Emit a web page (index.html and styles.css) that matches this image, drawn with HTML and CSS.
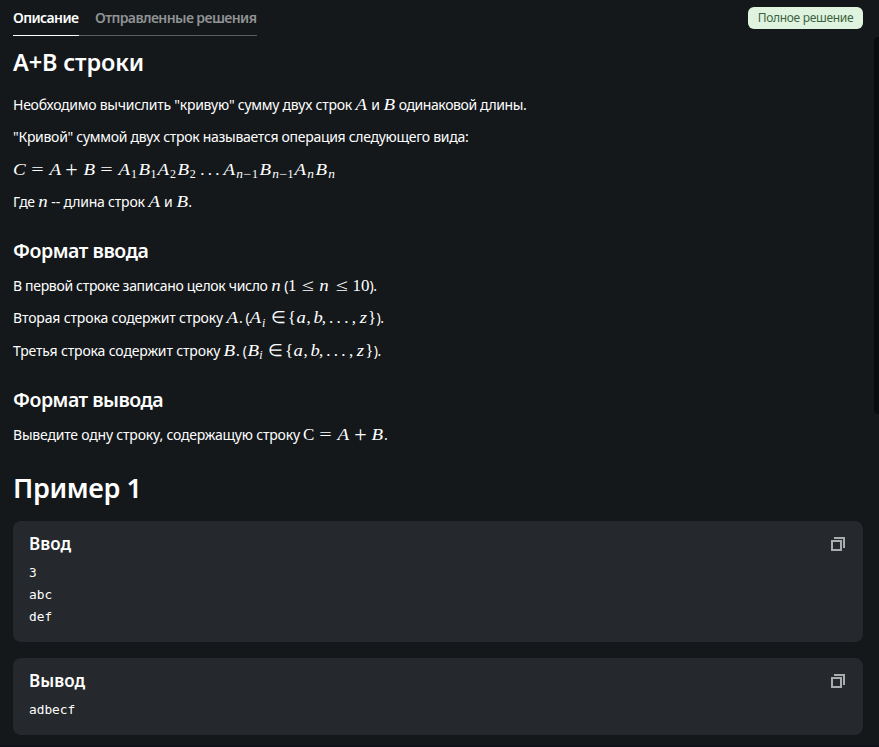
FILE: index.html
```html
<!DOCTYPE html>
<html lang="ru">
<head>
<meta charset="utf-8">
<title>A+B строки</title>
<link rel="stylesheet" href="styles.css">
</head>
<body>
<main class="page">
  <header class="top">
    <nav class="tabs"><a class="tab tab-active">Описание</a><a class="tab tab-second">Отправленные решения</a></nav>
    <span class="badge">Полное решение</span>
  </header>
  <h2 class="title">A+B строки</h2>
  <section class="text">
    <p><span class="t1">Необходимо вычислить "кривую" сумму двух строк</span> <i class="v">A</i> и <i class="v">B</i> <span class="t1b">одинаковой длины.</span></p>
    <p><span class="t2">"Кривой" суммой двух строк называется операция следующего вида:</span></p>
    <p><span class="m"><i class="v">C</i><b class="op">=</b><i class="v">A</i><b class="op plus">+</b><i class="v">B</i><b class="op">=</b><i class="v">A</i><sub>1</sub><i class="v">B</i><sub>1</sub><i class="v">A</i><sub>2</sub><i class="v">B</i><sub>2</sub><span class="dots">...</span><i class="v">A</i><sub><i class="n">n</i><b class="minus">−</b>1</sub><i class="v">B</i><sub><i class="n">n</i><b class="minus">−</b>1</sub><i class="v">A</i><sub><i class="n">n</i></sub><i class="v">B</i><sub><i class="n">n</i></sub></span></p>
    <p>Где <i class="v n">n</i> <span class="dash">--</span> <span class="t4">длина строк</span> <i class="v">A</i> и <i class="v">B</i>.</p>
  </section>
  <h3 class="sub">Формат ввода</h3>
  <section class="text">
    <p><span class="t5">В первой строке записано целок число</span> <i class="v n">n</i> (<span class="m">1<b class="op">≤</b><i class="n">n</i><b class="op">≤</b>10</span>).</p>
    <p><span class="t6">Вторая строка содержит строку</span> <i class="v">A</i>. (<span class="m"><i class="v">A</i><sub><i>i</i></sub><b class="op in">∈</b><span class="brace">{</span><i class="a">a</i><span class="c">,</span><i class="b">b</i><span class="c">,</span><span class="dots list">...</span><span class="c">,</span><i class="z">z</i><span class="brace">}</span></span>).</p>
    <p><span class="t6">Третья строка содержит строку</span> <i class="v">B</i>. (<span class="m"><i class="v">B</i><sub><i>i</i></sub><b class="op in">∈</b><span class="brace">{</span><i class="a">a</i><span class="c">,</span><i class="b">b</i><span class="c">,</span><span class="dots list">...</span><span class="c">,</span><i class="z">z</i><span class="brace">}</span></span>).</p>
  </section>
  <h3 class="sub sub-out">Формат вывода</h3>
  <section class="text">
    <p><span class="t8">Выведите одну строку, содержащую строку</span> <span class="m">C<b class="op">=</b><i class="v">A</i><b class="op plus">+</b><i class="v">B</i></span>.</p>
  </section>
  <h1 class="example">Пример 1</h1>
  <section class="card">
    <div class="card-head"><h4>Ввод</h4><svg class="copy" viewBox="0 0 16 16"><path d="M2 5h9v9H2zM4 2h10v10"/></svg></div>
    <pre>3
abc
def</pre>
  </section>
  <section class="card">
    <div class="card-head"><h4>Вывод</h4><svg class="copy" viewBox="0 0 16 16"><path d="M2 5h9v9H2zM4 2h10v10"/></svg></div>
    <pre>adbecf</pre>
  </section>
</main>
<div class="scrollbar"></div>
<div class="edge"></div>
</body>
</html>
```

FILE: styles.css
```css
* { box-sizing: border-box; }
body { margin: 0; height: 747px; overflow: hidden; background: #14181b; color: #fff; font: 14px/20px "Noto Sans", "Open Sans", sans-serif; }
h1, h2, h3, h4, p, pre { margin: 0; }
.page { padding: 0 16px 0 13px; }
.top { display: flex; justify-content: space-between; height: 36px; }
.tabs { display: flex; height: 36px; line-height: 36px; font-weight: 600; white-space: nowrap; }
.tab { border-bottom: 1px solid #5c5f61; color: #909294; width: 178px; padding-left: 16px; letter-spacing: -.6px; }
.tab-active { border-color: #fff; color: #fff; width: 66px; padding: 0; letter-spacing: -.6px; }
.badge { margin-top: 7px; width: 115px; height: 22px; border-radius: 6px; background: #e0f3df; color: #39633e; font-size: 12px; line-height: 21px; letter-spacing: -.3px; text-align: center; }
.title { margin-top: 10px; font-size: 23.5px; line-height: 32px; font-weight: 600; letter-spacing: -.15px; }
.text { margin-top: 11px; white-space: nowrap; letter-spacing: -.4px; }
.text p { height: 32.3px; line-height: 32.3px; }
.t1 { letter-spacing: -.25px; }
.t1b { letter-spacing: -.4px; }
.t2 { letter-spacing: -.29px; }
.dash { letter-spacing: .01px; font-variant-ligatures: none; }
.t4 { letter-spacing: -.2px; }
.t5 { letter-spacing: -.32px; }
.t6 { letter-spacing: -.15px; }
.t8 { letter-spacing: -.2px; }
.sub { margin-top: 19px; font-size: 19.5px; line-height: 28px; font-weight: 600; letter-spacing: -.45px; }
.sub + .text { margin-top: 5px; }
.sub-out { margin-top: 19px; letter-spacing: -.5px; }
.example { margin-top: 20px; font-size: 27px; line-height: 34px; font-weight: 600; letter-spacing: -.35px; }
.m, .v { font-family: "Liberation Serif", serif; font-size: 16.94px; letter-spacing: 0; }
.m .v { font-size: 1em; }
.v { display: inline-block; width: .75em; line-height: 20px; text-align: center; transform: scaleX(1.12); }
.n { display: inline-block; width: .6em; text-align: center; transform: scaleX(1.12); }
.op { display: inline-block; width: .778em; margin: 0 .29em; line-height: 20px; font-weight: 400; text-align: center; transform: scaleX(1.3); }
.plus { margin: 0 .24em; transform: scale(1.3); }
.in { width: .667em; margin: 0 .34em 0 .27em; transform: none; }
sub { font-size: .707em; line-height: 0; vertical-align: -.28em; margin-right: .07em; }
.minus { display: inline-block; width: .74em; line-height: 10px; font-weight: 400; text-align: center; transform: scaleX(1.2); }
.dots { letter-spacing: .195em; margin: 0 .03em 0 .22em; }
.list { margin-left: 0; margin-right: 0; }
.a, .b, .z { display: inline-block; width: .6em; line-height: 20px; text-align: center; transform: scaleX(1.1); }
.b { width: .48em; }
.z { width: .53em; }
.c { margin-right: .18em; }
.brace { letter-spacing: .02em; }
.card { margin-bottom: 16px; padding: 11px 16px 14px; border-radius: 8px; background: #25282c; }
.example + .card { margin-top: 16px; }
.card-head { display: flex; justify-content: space-between; height: 30px; }
.card h4 { font-size: 17px; line-height: 24px; font-weight: 600; letter-spacing: .05px; }
.copy { width: 16px; height: 16px; margin-top: 4px; margin-right: 1px; fill: none; stroke: #aaacae; stroke-width: 2; }
pre { font: 12.8px/22px "DejaVu Sans Mono", monospace; }
.scrollbar { position: absolute; right: 0; top: 37px; width: 5px; height: 377px; border-radius: 4px 0 0 4px; background: #090c0f; }
.edge { position: absolute; left: 0; right: 0; bottom: 0; height: 2px; background: #11131a; }
```
